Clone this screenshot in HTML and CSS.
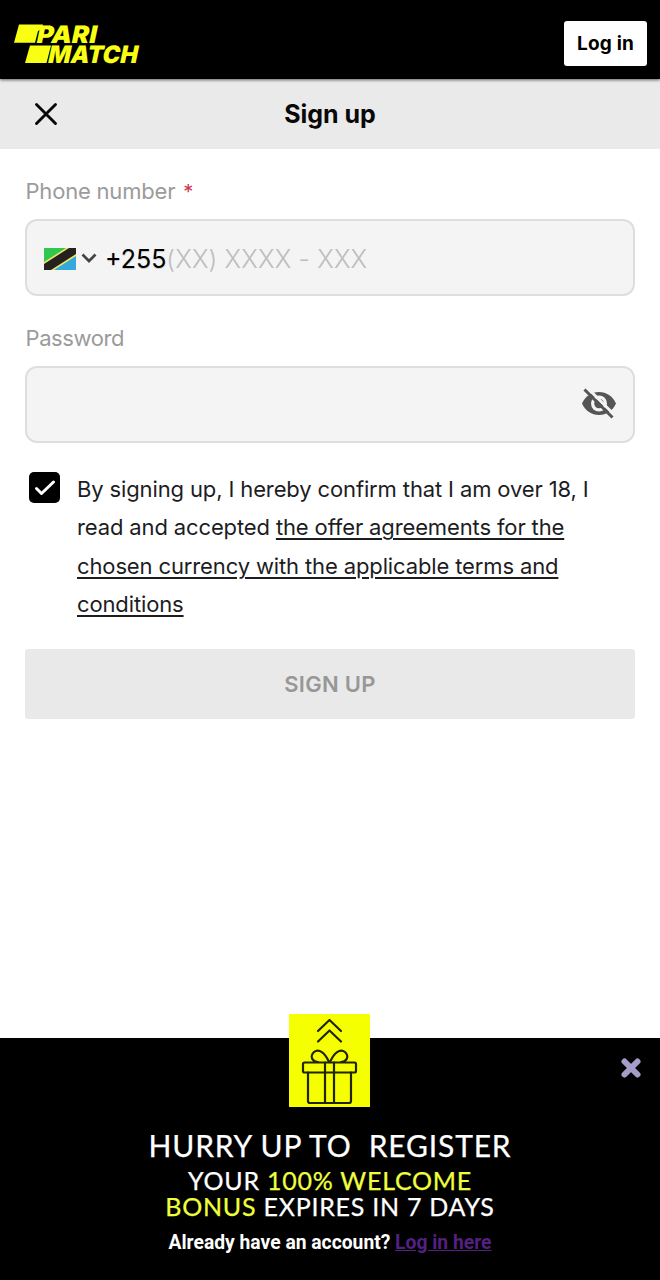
FILE: index.html
```html
<!DOCTYPE html>
<html lang="en">
<head>
<meta charset="utf-8">
<meta name="viewport" content="width=device-width">
<title>Sign up</title>
<link rel="stylesheet" href="styles.css">
</head>
<body>
<div class="page">
  <header class="topbar">
    <svg class="logo" viewBox="0 0 128 42" width="128" height="42" role="img" aria-label="Parimatch">
      <path d="M6 3.500H30L29 8L25 10L22 21.700H1z"/>
      <path d="M17 24.500H38L33.500 42H12z"/>
      <g transform="skewX(-12)">
        <text x="27" y="21.500" textLength="60" lengthAdjust="spacingAndGlyphs">PARI</text>
        <text x="43" y="42" textLength="89.500" lengthAdjust="spacingAndGlyphs">MATCH</text>
      </g>
    </svg>
    <button class="login">Log in</button>
  </header>
  <div class="titlebar">
    <svg class="close" viewBox="0 0 24 24" width="24" height="24"><path d="M2.500 2.500l19 19M21.500 2.500l-19 19"/></svg>
    <h1 class="title">Sign up</h1>
  </div>
  <main class="form">
    <div class="label">Phone number <span class="required">*</span></div>
    <div class="field phone">
      <svg class="flag" viewBox="0 0 32 22" width="32" height="22">
        <path fill="#2fc74f" d="M0 0h32v22H0z"/><path fill="#35a8dc" d="M32 0v22H0z"/>
        <path fill="#f0e66a" d="M0 14L22 0H32V8L10 22H0z"/><path fill="#24211e" d="M0 16L25 0H32V6L7 22H0z"/>
      </svg>
      <svg class="chevron" viewBox="0 0 16 10" width="16" height="10"><path d="M1.500 1.500L8 8l6.500-6.500"/></svg>
      <span class="code">+255</span><span class="mask">(XX) XXXX - XXX</span>
    </div>
    <div class="label password-label">Password</div>
    <div class="field password">
      <svg class="eye" viewBox="0 0 36 32" width="36" height="32">
        <path class="lid" d="M1 15.500C4.500 8 10.500 4 18 4s13.500 4 17 11.500C31.500 23 25.500 27 18 27S4.500 23 1 15.500z"/>
        <circle class="iris" cx="18" cy="15.500" r="8"/>
        <circle class="pupil" cx="18" cy="15.500" r="4.800"/>
        <path class="gap" d="M5.500-1L36 29.500"/>
        <path class="slash" d="M3.500 1.500L31.500 29.500"/>
      </svg>
    </div>
    <div class="consent">
      <svg class="check" viewBox="0 0 31 31" width="31" height="31"><rect width="31" height="31" rx="5"/><path d="M7.500 16.500l5 5L24.500 10"/></svg>
      <p class="terms">By signing up, I hereby confirm that I am over 18, I<br>read and accepted <u>the offer agreements for the</u><br><u>chosen currency with the applicable terms and</u><br><u>conditions</u></p>
    </div>
    <button class="submit">SIGN UP</button>
  </main>
  <footer class="promo">
    <div class="gift">
      <svg viewBox="0 0 81 93" width="81" height="93">
        <path d="M29 17L40.500 6L52 17M29 27.500L40.500 16.500L52 27.500"/>
        <rect x="14" y="48.500" width="53" height="10" rx="1.500"/>
        <path d="M19 58.500V87q0 2 2 2H60q2 0 2-2V58.500M36 48.500V89M45 48.500V89M40 48C36 39 30 34 25 38C20 43 24 48 29 48M41 48C45 39 51 34 56 38C61 43 57 48 52 48"/>
      </svg>
    </div>
    <svg class="dismiss" viewBox="0 0 20 20" width="20" height="20"><path d="M3.500 3.500l13 13M16.500 3.500l-13 13"/></svg>
    <div class="headline">HURRY UP TO&nbsp; REGISTER</div>
    <div class="offer">YOUR <b>100% WELCOME</b><br><b>BONUS</b> EXPIRES IN 7 DAYS</div>
    <div class="account">Already have an account? <a class="here">Log in here</a></div>
  </footer>
</div>
</body>
</html>
```
FILE: styles.css
```css
* { box-sizing: border-box; }
body { margin: 0; background: #fff; font-family: Inter, "Liberation Sans", sans-serif; color: #1d1d1f; }
.page { width: 660px; height: 1280px; display: flex; flex-direction: column; overflow: hidden; }
svg { display: block; flex: none; overflow: visible; }
button { border: 0; padding: 0; font-family: inherit; }
.topbar { height: 79px; flex: none; background: #000; display: flex; align-items: flex-start; justify-content: space-between; padding: 21px 13px 0; box-shadow: 0 1px 3px rgba(0,0,0,.6); z-index: 1; }
.logo { fill: #f8ff13; font: 900 24px Inter, sans-serif; }
.login { width: 83px; height: 45px; background: #fff; border-radius: 3px; color: #000; font-size: 19px; font-weight: 650; letter-spacing: .2px; line-height: 45px; }
.titlebar { height: 70px; flex: none; background: #eaeaea; display: grid; grid-template-columns: 92px 1fr 92px; align-items: center; justify-items: center; }
.close { fill: none; stroke: #080808; stroke-width: 2.9; stroke-linecap: round; }
.title { margin: 0; font-size: 25px; line-height: 30px; font-weight: 680; letter-spacing: 0; color: #080808; }
.form { flex: 1; padding: 29px 25px 0 25px; }
.label { height: 26px; line-height: 26px; font-size: 22px; letter-spacing: -.2px; color: #9b9b9b; padding-left: .500px; }
.required { color: #cf3450; margin-left: 2px; font-size: 20px; }
.field { height: 77px; border: 2px solid #dedede; border-radius: 12px; background: #f4f4f4; display: flex; align-items: center; }
.phone { margin-top: 15px; padding-left: 17px; }
.flag { margin-top: 2px; }
.chevron { margin-left: 5px; fill: none; stroke: #444; stroke-width: 2.7; }
.code, .mask { font-size: 25px; white-space: nowrap; }
.code { color: #000; margin: 2px 0 0 8px; text-shadow: 0 1px 1px rgba(0,0,0,.2); }
.mask { color: #bdbdbd; font-weight: 300; letter-spacing: .15px; margin-top: 3px; }
.password-label { margin-top: 29px; letter-spacing: -.4px; }
.password { margin-top: 15px; justify-content: flex-end; padding-right: 16px; }
.eye { margin-top: -1px; }
.lid, .pupil { fill: #555; }
.iris { fill: #f4f4f4; }
.gap { stroke: #f4f4f4; stroke-width: 3; }
.slash { stroke: #555; stroke-width: 3; }
.consent { display: flex; margin-top: 29px; padding-left: 4px; }
.check path { fill: none; stroke: #fff; stroke-width: 3; stroke-linecap: round; stroke-linejoin: round; }
.terms { margin: -2px 0 0 17px; font-size: 22px; line-height: 38.400px; letter-spacing: -.13px; white-space: nowrap; }
u { text-decoration-thickness: 1.500px; text-underline-offset: 3px; }
.submit { display: block; width: 100%; height: 70px; margin-top: 25px; background: #e9e9e9; border-radius: 3px; color: #979797; font-size: 22px; font-weight: 620; letter-spacing: .3px; }
.promo { height: 242px; flex: none; background: #000; color: #fff; position: relative; padding-top: 91px; text-align: center; white-space: nowrap; }
.gift { position: absolute; left: 289px; top: -24px; width: 81px; height: 93px; background: #f5ff00; }
.gift svg { fill: none; stroke: #202500; stroke-width: 2.2; stroke-linejoin: round; stroke-linecap: round; }
.dismiss { position: absolute; left: 621px; top: 20px; stroke: #a69cc8; stroke-width: 6; stroke-linecap: round; }
.headline { font: 400 30px/32px Lato, sans-serif; letter-spacing: .850px; -webkit-text-stroke: .25px currentColor; }
.offer { margin-top: 6px; font: 400 25px/26px Lato, sans-serif; letter-spacing: .750px; -webkit-text-stroke: .25px currentColor; }
.offer b { font-weight: 400; color: #efff3d; }
.account { margin-top: 12px; font: 700 19.300px/24px Roboto, sans-serif; }
.here { color: #542080; text-decoration: underline; }
```
